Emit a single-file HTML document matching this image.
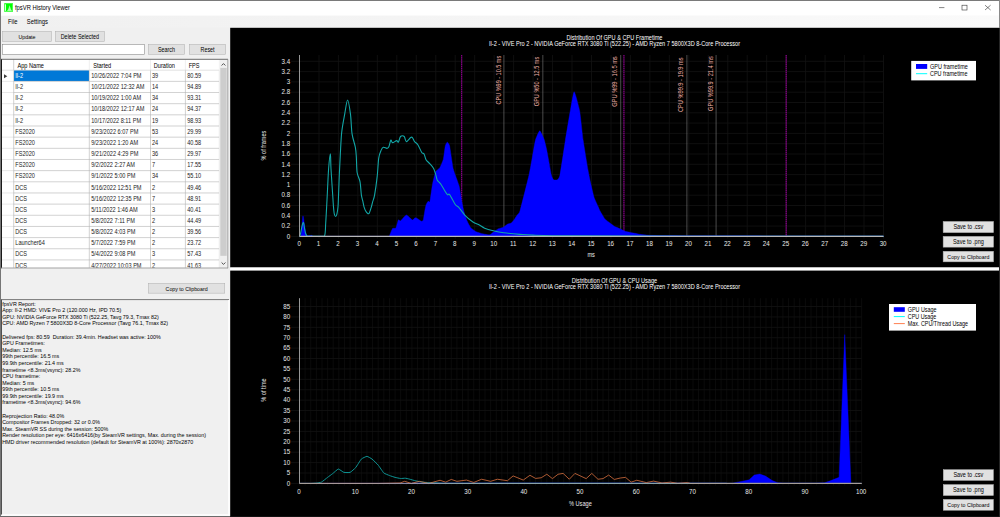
<!DOCTYPE html>
<html><head><meta charset="utf-8"><title>fpsVR History Viewer</title>
<style>html,body{margin:0;padding:0;width:1000px;height:517px;overflow:hidden;background:#f0f0f0;font-family:"Liberation Sans", sans-serif;}</style>
</head><body>
<svg width="1000" height="517" viewBox="0 0 1000 517" style="position:absolute;left:0;top:0" font-family='"Liberation Sans", sans-serif'>
<defs><linearGradient id="mg" x1="0" x2="1" y1="0" y2="0"><stop offset="0" stop-color="#f0f0f0"/><stop offset="1" stop-color="#fafafa"/></linearGradient></defs>
<rect x="0.00" y="0.00" width="1000.00" height="517.00" fill="#f0f0f0" />
<rect x="0.00" y="0.00" width="1000.00" height="15.80" fill="#ffffff" />
<rect x="0.00" y="15.80" width="1000.00" height="11.80" fill="url(#mg)" />
<rect x="4.20" y="3.00" width="8.70" height="8.80" fill="#00ff00" />
<rect x="4.60" y="3.40" width="7.90" height="8.00" fill="none" stroke="#70ff70" stroke-width="0.6" />
<rect x="5.00" y="4.30" width="0.90" height="6.50" fill="#f4fff4" />
<path d="M6.8,10.9 C8.2,10.6 8.6,8 9.6,5.2 C10.6,8 11,10.6 12.2,10.9 Z" fill="#a8ffa8"/>
<text x="0" y="0" transform="matrix(1,0,0,1.18,15.00,10.20)" font-size="5.85" fill="#000" text-anchor="start" >fpsVR History Viewer</text>
<line x1="939.00" y1="7.60" x2="944.40" y2="7.60" stroke="#333" stroke-width="0.6" />
<rect x="962.00" y="5.20" width="5.00" height="4.80" fill="none" stroke="#333" stroke-width="0.6" />
<line x1="985.00" y1="5.20" x2="990.60" y2="10.00" stroke="#333" stroke-width="0.6" />
<line x1="990.60" y1="5.20" x2="985.00" y2="10.00" stroke="#333" stroke-width="0.6" />
<text x="0" y="0" transform="matrix(1,0,0,1.15,8.00,23.60)" font-size="5.87" fill="#000" text-anchor="start" >File</text>
<text x="0" y="0" transform="matrix(1,0,0,1.15,26.80,23.60)" font-size="5.87" fill="#000" text-anchor="start" >Settings</text>
<rect x="2.55" y="31.45" width="48.90" height="10.00" fill="#e1e1e1" stroke="#adadad" stroke-width="0.5" />
<text x="0" y="0" transform="matrix(1,0,0,1.18,27.00,38.90)" font-size="5.3" fill="#000" text-anchor="middle" >Update</text>
<rect x="55.25" y="31.45" width="49.20" height="10.00" fill="#e1e1e1" stroke="#adadad" stroke-width="0.5" />
<text x="0" y="0" transform="matrix(1,0,0,1.18,79.85,38.90)" font-size="5.44" fill="#000" text-anchor="middle" >Delete Selected</text>
<rect x="2.55" y="44.55" width="141.90" height="9.70" fill="#ffffff" stroke="#7a7a7a" stroke-width="0.5" />
<rect x="148.45" y="44.35" width="36.10" height="9.90" fill="#e1e1e1" stroke="#adadad" stroke-width="0.5" />
<text x="0" y="0" transform="matrix(1,0,0,1.18,166.50,51.60)" font-size="5.4" fill="#000" text-anchor="middle" >Search</text>
<rect x="189.45" y="44.35" width="36.20" height="9.90" fill="#e1e1e1" stroke="#adadad" stroke-width="0.5" />
<text x="0" y="0" transform="matrix(1,0,0,1.18,207.55,51.60)" font-size="5.4" fill="#000" text-anchor="middle" >Reset</text>
<rect x="1.00" y="59.00" width="227.00" height="209.20" fill="#ffffff" />
<clipPath id="lc"><rect x="1.5" y="59.5" width="218" height="208.2"/></clipPath>
<g clip-path="url(#lc)">
<rect x="14.00" y="70.20" width="75.00" height="10.86" fill="#0078d7" />
<line x1="1.00" y1="81.36" x2="13.70" y2="81.36" stroke="#d8d8d8" stroke-width="0.6" />
<line x1="13.70" y1="81.36" x2="219.40" y2="81.36" stroke="#b4b4b4" stroke-width="0.6" />
<text x="0" y="0" transform="matrix(1,0,0,1.18,15.30,77.90)" font-size="5.6" fill="#ffffff" text-anchor="start" >Il-2</text>
<text x="0" y="0" transform="matrix(1,0,0,1.18,91.20,77.90)" font-size="5.6" fill="#1c1c1c" text-anchor="start" >10/26/2022 7:04 PM</text>
<text x="0" y="0" transform="matrix(1,0,0,1.18,152.00,77.90)" font-size="5.6" fill="#1c1c1c" text-anchor="start" >39</text>
<text x="0" y="0" transform="matrix(1,0,0,1.18,187.20,77.90)" font-size="5.6" fill="#1c1c1c" text-anchor="start" >80.59</text>
<line x1="1.00" y1="92.52" x2="13.70" y2="92.52" stroke="#d8d8d8" stroke-width="0.6" />
<line x1="13.70" y1="92.52" x2="219.40" y2="92.52" stroke="#b4b4b4" stroke-width="0.6" />
<text x="0" y="0" transform="matrix(1,0,0,1.18,15.30,89.06)" font-size="5.6" fill="#1c1c1c" text-anchor="start" >Il-2</text>
<text x="0" y="0" transform="matrix(1,0,0,1.18,91.20,89.06)" font-size="5.6" fill="#1c1c1c" text-anchor="start" >10/21/2022 12:32 AM</text>
<text x="0" y="0" transform="matrix(1,0,0,1.18,152.00,89.06)" font-size="5.6" fill="#1c1c1c" text-anchor="start" >14</text>
<text x="0" y="0" transform="matrix(1,0,0,1.18,187.20,89.06)" font-size="5.6" fill="#1c1c1c" text-anchor="start" >94.89</text>
<line x1="1.00" y1="103.68" x2="13.70" y2="103.68" stroke="#d8d8d8" stroke-width="0.6" />
<line x1="13.70" y1="103.68" x2="219.40" y2="103.68" stroke="#b4b4b4" stroke-width="0.6" />
<text x="0" y="0" transform="matrix(1,0,0,1.18,15.30,100.22)" font-size="5.6" fill="#1c1c1c" text-anchor="start" >Il-2</text>
<text x="0" y="0" transform="matrix(1,0,0,1.18,91.20,100.22)" font-size="5.6" fill="#1c1c1c" text-anchor="start" >10/19/2022 1:00 AM</text>
<text x="0" y="0" transform="matrix(1,0,0,1.18,152.00,100.22)" font-size="5.6" fill="#1c1c1c" text-anchor="start" >34</text>
<text x="0" y="0" transform="matrix(1,0,0,1.18,187.20,100.22)" font-size="5.6" fill="#1c1c1c" text-anchor="start" >93.31</text>
<line x1="1.00" y1="114.84" x2="13.70" y2="114.84" stroke="#d8d8d8" stroke-width="0.6" />
<line x1="13.70" y1="114.84" x2="219.40" y2="114.84" stroke="#b4b4b4" stroke-width="0.6" />
<text x="0" y="0" transform="matrix(1,0,0,1.18,15.30,111.38)" font-size="5.6" fill="#1c1c1c" text-anchor="start" >Il-2</text>
<text x="0" y="0" transform="matrix(1,0,0,1.18,91.20,111.38)" font-size="5.6" fill="#1c1c1c" text-anchor="start" >10/18/2022 12:17 AM</text>
<text x="0" y="0" transform="matrix(1,0,0,1.18,152.00,111.38)" font-size="5.6" fill="#1c1c1c" text-anchor="start" >24</text>
<text x="0" y="0" transform="matrix(1,0,0,1.18,187.20,111.38)" font-size="5.6" fill="#1c1c1c" text-anchor="start" >94.37</text>
<line x1="1.00" y1="126.00" x2="13.70" y2="126.00" stroke="#d8d8d8" stroke-width="0.6" />
<line x1="13.70" y1="126.00" x2="219.40" y2="126.00" stroke="#b4b4b4" stroke-width="0.6" />
<text x="0" y="0" transform="matrix(1,0,0,1.18,15.30,122.54)" font-size="5.6" fill="#1c1c1c" text-anchor="start" >Il-2</text>
<text x="0" y="0" transform="matrix(1,0,0,1.18,91.20,122.54)" font-size="5.6" fill="#1c1c1c" text-anchor="start" >10/17/2022 8:11 PM</text>
<text x="0" y="0" transform="matrix(1,0,0,1.18,152.00,122.54)" font-size="5.6" fill="#1c1c1c" text-anchor="start" >19</text>
<text x="0" y="0" transform="matrix(1,0,0,1.18,187.20,122.54)" font-size="5.6" fill="#1c1c1c" text-anchor="start" >98.93</text>
<line x1="1.00" y1="137.16" x2="13.70" y2="137.16" stroke="#d8d8d8" stroke-width="0.6" />
<line x1="13.70" y1="137.16" x2="219.40" y2="137.16" stroke="#b4b4b4" stroke-width="0.6" />
<text x="0" y="0" transform="matrix(1,0,0,1.18,15.30,133.70)" font-size="5.6" fill="#1c1c1c" text-anchor="start" >FS2020</text>
<text x="0" y="0" transform="matrix(1,0,0,1.18,91.20,133.70)" font-size="5.6" fill="#1c1c1c" text-anchor="start" >9/23/2022 6:07 PM</text>
<text x="0" y="0" transform="matrix(1,0,0,1.18,152.00,133.70)" font-size="5.6" fill="#1c1c1c" text-anchor="start" >53</text>
<text x="0" y="0" transform="matrix(1,0,0,1.18,187.20,133.70)" font-size="5.6" fill="#1c1c1c" text-anchor="start" >29.99</text>
<line x1="1.00" y1="148.32" x2="13.70" y2="148.32" stroke="#d8d8d8" stroke-width="0.6" />
<line x1="13.70" y1="148.32" x2="219.40" y2="148.32" stroke="#b4b4b4" stroke-width="0.6" />
<text x="0" y="0" transform="matrix(1,0,0,1.18,15.30,144.86)" font-size="5.6" fill="#1c1c1c" text-anchor="start" >FS2020</text>
<text x="0" y="0" transform="matrix(1,0,0,1.18,91.20,144.86)" font-size="5.6" fill="#1c1c1c" text-anchor="start" >9/23/2022 1:20 AM</text>
<text x="0" y="0" transform="matrix(1,0,0,1.18,152.00,144.86)" font-size="5.6" fill="#1c1c1c" text-anchor="start" >24</text>
<text x="0" y="0" transform="matrix(1,0,0,1.18,187.20,144.86)" font-size="5.6" fill="#1c1c1c" text-anchor="start" >40.58</text>
<line x1="1.00" y1="159.48" x2="13.70" y2="159.48" stroke="#d8d8d8" stroke-width="0.6" />
<line x1="13.70" y1="159.48" x2="219.40" y2="159.48" stroke="#b4b4b4" stroke-width="0.6" />
<text x="0" y="0" transform="matrix(1,0,0,1.18,15.30,156.02)" font-size="5.6" fill="#1c1c1c" text-anchor="start" >FS2020</text>
<text x="0" y="0" transform="matrix(1,0,0,1.18,91.20,156.02)" font-size="5.6" fill="#1c1c1c" text-anchor="start" >9/21/2022 4:29 PM</text>
<text x="0" y="0" transform="matrix(1,0,0,1.18,152.00,156.02)" font-size="5.6" fill="#1c1c1c" text-anchor="start" >36</text>
<text x="0" y="0" transform="matrix(1,0,0,1.18,187.20,156.02)" font-size="5.6" fill="#1c1c1c" text-anchor="start" >29.97</text>
<line x1="1.00" y1="170.64" x2="13.70" y2="170.64" stroke="#d8d8d8" stroke-width="0.6" />
<line x1="13.70" y1="170.64" x2="219.40" y2="170.64" stroke="#b4b4b4" stroke-width="0.6" />
<text x="0" y="0" transform="matrix(1,0,0,1.18,15.30,167.18)" font-size="5.6" fill="#1c1c1c" text-anchor="start" >FS2020</text>
<text x="0" y="0" transform="matrix(1,0,0,1.18,91.20,167.18)" font-size="5.6" fill="#1c1c1c" text-anchor="start" >9/2/2022 2:27 AM</text>
<text x="0" y="0" transform="matrix(1,0,0,1.18,152.00,167.18)" font-size="5.6" fill="#1c1c1c" text-anchor="start" >7</text>
<text x="0" y="0" transform="matrix(1,0,0,1.18,187.20,167.18)" font-size="5.6" fill="#1c1c1c" text-anchor="start" >17.55</text>
<line x1="1.00" y1="181.80" x2="13.70" y2="181.80" stroke="#d8d8d8" stroke-width="0.6" />
<line x1="13.70" y1="181.80" x2="219.40" y2="181.80" stroke="#b4b4b4" stroke-width="0.6" />
<text x="0" y="0" transform="matrix(1,0,0,1.18,15.30,178.34)" font-size="5.6" fill="#1c1c1c" text-anchor="start" >FS2020</text>
<text x="0" y="0" transform="matrix(1,0,0,1.18,91.20,178.34)" font-size="5.6" fill="#1c1c1c" text-anchor="start" >9/1/2022 5:00 PM</text>
<text x="0" y="0" transform="matrix(1,0,0,1.18,152.00,178.34)" font-size="5.6" fill="#1c1c1c" text-anchor="start" >34</text>
<text x="0" y="0" transform="matrix(1,0,0,1.18,187.20,178.34)" font-size="5.6" fill="#1c1c1c" text-anchor="start" >55.10</text>
<line x1="1.00" y1="192.96" x2="13.70" y2="192.96" stroke="#d8d8d8" stroke-width="0.6" />
<line x1="13.70" y1="192.96" x2="219.40" y2="192.96" stroke="#b4b4b4" stroke-width="0.6" />
<text x="0" y="0" transform="matrix(1,0,0,1.18,15.30,189.50)" font-size="5.6" fill="#1c1c1c" text-anchor="start" >DCS</text>
<text x="0" y="0" transform="matrix(1,0,0,1.18,91.20,189.50)" font-size="5.6" fill="#1c1c1c" text-anchor="start" >5/16/2022 12:51 PM</text>
<text x="0" y="0" transform="matrix(1,0,0,1.18,152.00,189.50)" font-size="5.6" fill="#1c1c1c" text-anchor="start" >2</text>
<text x="0" y="0" transform="matrix(1,0,0,1.18,187.20,189.50)" font-size="5.6" fill="#1c1c1c" text-anchor="start" >49.46</text>
<line x1="1.00" y1="204.12" x2="13.70" y2="204.12" stroke="#d8d8d8" stroke-width="0.6" />
<line x1="13.70" y1="204.12" x2="219.40" y2="204.12" stroke="#b4b4b4" stroke-width="0.6" />
<text x="0" y="0" transform="matrix(1,0,0,1.18,15.30,200.66)" font-size="5.6" fill="#1c1c1c" text-anchor="start" >DCS</text>
<text x="0" y="0" transform="matrix(1,0,0,1.18,91.20,200.66)" font-size="5.6" fill="#1c1c1c" text-anchor="start" >5/16/2022 12:35 PM</text>
<text x="0" y="0" transform="matrix(1,0,0,1.18,152.00,200.66)" font-size="5.6" fill="#1c1c1c" text-anchor="start" >7</text>
<text x="0" y="0" transform="matrix(1,0,0,1.18,187.20,200.66)" font-size="5.6" fill="#1c1c1c" text-anchor="start" >48.91</text>
<line x1="1.00" y1="215.28" x2="13.70" y2="215.28" stroke="#d8d8d8" stroke-width="0.6" />
<line x1="13.70" y1="215.28" x2="219.40" y2="215.28" stroke="#b4b4b4" stroke-width="0.6" />
<text x="0" y="0" transform="matrix(1,0,0,1.18,15.30,211.82)" font-size="5.6" fill="#1c1c1c" text-anchor="start" >DCS</text>
<text x="0" y="0" transform="matrix(1,0,0,1.18,91.20,211.82)" font-size="5.6" fill="#1c1c1c" text-anchor="start" >5/11/2022 1:46 AM</text>
<text x="0" y="0" transform="matrix(1,0,0,1.18,152.00,211.82)" font-size="5.6" fill="#1c1c1c" text-anchor="start" >3</text>
<text x="0" y="0" transform="matrix(1,0,0,1.18,187.20,211.82)" font-size="5.6" fill="#1c1c1c" text-anchor="start" >40.41</text>
<line x1="1.00" y1="226.44" x2="13.70" y2="226.44" stroke="#d8d8d8" stroke-width="0.6" />
<line x1="13.70" y1="226.44" x2="219.40" y2="226.44" stroke="#b4b4b4" stroke-width="0.6" />
<text x="0" y="0" transform="matrix(1,0,0,1.18,15.30,222.98)" font-size="5.6" fill="#1c1c1c" text-anchor="start" >DCS</text>
<text x="0" y="0" transform="matrix(1,0,0,1.18,91.20,222.98)" font-size="5.6" fill="#1c1c1c" text-anchor="start" >5/8/2022 7:11 PM</text>
<text x="0" y="0" transform="matrix(1,0,0,1.18,152.00,222.98)" font-size="5.6" fill="#1c1c1c" text-anchor="start" >2</text>
<text x="0" y="0" transform="matrix(1,0,0,1.18,187.20,222.98)" font-size="5.6" fill="#1c1c1c" text-anchor="start" >44.49</text>
<line x1="1.00" y1="237.60" x2="13.70" y2="237.60" stroke="#d8d8d8" stroke-width="0.6" />
<line x1="13.70" y1="237.60" x2="219.40" y2="237.60" stroke="#b4b4b4" stroke-width="0.6" />
<text x="0" y="0" transform="matrix(1,0,0,1.18,15.30,234.14)" font-size="5.6" fill="#1c1c1c" text-anchor="start" >DCS</text>
<text x="0" y="0" transform="matrix(1,0,0,1.18,91.20,234.14)" font-size="5.6" fill="#1c1c1c" text-anchor="start" >5/8/2022 4:03 PM</text>
<text x="0" y="0" transform="matrix(1,0,0,1.18,152.00,234.14)" font-size="5.6" fill="#1c1c1c" text-anchor="start" >2</text>
<text x="0" y="0" transform="matrix(1,0,0,1.18,187.20,234.14)" font-size="5.6" fill="#1c1c1c" text-anchor="start" >39.56</text>
<line x1="1.00" y1="248.76" x2="13.70" y2="248.76" stroke="#d8d8d8" stroke-width="0.6" />
<line x1="13.70" y1="248.76" x2="219.40" y2="248.76" stroke="#b4b4b4" stroke-width="0.6" />
<text x="0" y="0" transform="matrix(1,0,0,1.18,15.30,245.30)" font-size="5.6" fill="#1c1c1c" text-anchor="start" >Launcher64</text>
<text x="0" y="0" transform="matrix(1,0,0,1.18,91.20,245.30)" font-size="5.6" fill="#1c1c1c" text-anchor="start" >5/7/2022 7:59 PM</text>
<text x="0" y="0" transform="matrix(1,0,0,1.18,152.00,245.30)" font-size="5.6" fill="#1c1c1c" text-anchor="start" >2</text>
<text x="0" y="0" transform="matrix(1,0,0,1.18,187.20,245.30)" font-size="5.6" fill="#1c1c1c" text-anchor="start" >23.72</text>
<line x1="1.00" y1="259.92" x2="13.70" y2="259.92" stroke="#d8d8d8" stroke-width="0.6" />
<line x1="13.70" y1="259.92" x2="219.40" y2="259.92" stroke="#b4b4b4" stroke-width="0.6" />
<text x="0" y="0" transform="matrix(1,0,0,1.18,15.30,256.46)" font-size="5.6" fill="#1c1c1c" text-anchor="start" >DCS</text>
<text x="0" y="0" transform="matrix(1,0,0,1.18,91.20,256.46)" font-size="5.6" fill="#1c1c1c" text-anchor="start" >5/4/2022 9:08 PM</text>
<text x="0" y="0" transform="matrix(1,0,0,1.18,152.00,256.46)" font-size="5.6" fill="#1c1c1c" text-anchor="start" >3</text>
<text x="0" y="0" transform="matrix(1,0,0,1.18,187.20,256.46)" font-size="5.6" fill="#1c1c1c" text-anchor="start" >57.43</text>
<line x1="1.00" y1="271.08" x2="13.70" y2="271.08" stroke="#d8d8d8" stroke-width="0.6" />
<line x1="13.70" y1="271.08" x2="219.40" y2="271.08" stroke="#b4b4b4" stroke-width="0.6" />
<text x="0" y="0" transform="matrix(1,0,0,1.18,15.30,267.62)" font-size="5.6" fill="#1c1c1c" text-anchor="start" >DCS</text>
<text x="0" y="0" transform="matrix(1,0,0,1.18,91.20,267.62)" font-size="5.6" fill="#1c1c1c" text-anchor="start" >4/27/2022 10:03 PM</text>
<text x="0" y="0" transform="matrix(1,0,0,1.18,152.00,267.62)" font-size="5.6" fill="#1c1c1c" text-anchor="start" >2</text>
<text x="0" y="0" transform="matrix(1,0,0,1.18,187.20,267.62)" font-size="5.6" fill="#1c1c1c" text-anchor="start" >41.63</text>
<line x1="13.70" y1="59.00" x2="13.70" y2="268.20" stroke="#b4b4b4" stroke-width="0.6" />
<line x1="89.30" y1="70.20" x2="89.30" y2="268.20" stroke="#b4b4b4" stroke-width="0.6" />
<line x1="89.30" y1="59.00" x2="89.30" y2="70.20" stroke="#e4e4e4" stroke-width="0.6" />
<line x1="150.50" y1="70.20" x2="150.50" y2="268.20" stroke="#b4b4b4" stroke-width="0.6" />
<line x1="150.50" y1="59.00" x2="150.50" y2="70.20" stroke="#e4e4e4" stroke-width="0.6" />
<line x1="185.40" y1="70.20" x2="185.40" y2="268.20" stroke="#b4b4b4" stroke-width="0.6" />
<line x1="185.40" y1="59.00" x2="185.40" y2="70.20" stroke="#e4e4e4" stroke-width="0.6" />
<line x1="219.40" y1="70.20" x2="219.40" y2="268.20" stroke="#b4b4b4" stroke-width="0.6" />
<line x1="219.40" y1="59.00" x2="219.40" y2="70.20" stroke="#e4e4e4" stroke-width="0.6" />
<line x1="1.00" y1="70.20" x2="219.40" y2="70.20" stroke="#d0d0d0" stroke-width="0.6" />
</g>
<text x="0" y="0" transform="matrix(1,0,0,1.18,17.50,67.50)" font-size="5.6" fill="#000" text-anchor="start" >App Name</text>
<text x="0" y="0" transform="matrix(1,0,0,1.18,93.20,67.50)" font-size="5.6" fill="#000" text-anchor="start" >Started</text>
<text x="0" y="0" transform="matrix(1,0,0,1.18,153.80,67.50)" font-size="5.6" fill="#000" text-anchor="start" >Duration</text>
<text x="0" y="0" transform="matrix(1,0,0,1.18,188.70,67.50)" font-size="5.6" fill="#000" text-anchor="start" >FPS</text>
<path d="M4,74.3 L7.3,76.3 L4,78.3 Z" fill="#3c3c3c"/>
<rect x="219.40" y="59.50" width="8.10" height="208.20" fill="#f0f0f0" />
<rect x="220.30" y="67.90" width="6.40" height="187.90" fill="#cdcdcd" />
<path d="M221.6,65.5 L223.5,63.6 L225.4,65.5" fill="none" stroke="#404040" stroke-width="0.9"/>
<path d="M221.6,262.5 L223.5,264.4 L225.4,262.5" fill="none" stroke="#404040" stroke-width="0.9"/>
<line x1="1.00" y1="59.30" x2="228.00" y2="59.30" stroke="#5a5a5a" stroke-width="0.9" />
<line x1="1.50" y1="59.30" x2="1.50" y2="268.20" stroke="#1a1a1a" stroke-width="1.0" />
<line x1="227.80" y1="59.30" x2="227.80" y2="268.20" stroke="#8a8a8a" stroke-width="0.8" />
<line x1="1.00" y1="268.00" x2="228.00" y2="268.00" stroke="#8a8a8a" stroke-width="0.8" />
<rect x="148.45" y="283.45" width="76.30" height="9.70" fill="#e1e1e1" stroke="#adadad" stroke-width="0.5" />
<text x="0" y="0" transform="matrix(1,0,0,1.18,186.60,290.60)" font-size="5.25" fill="#000" text-anchor="middle" >Copy to Clipboard</text>
<rect x="1.00" y="299.50" width="229.00" height="216.00" fill="#f0f0f0" />
<line x1="1.00" y1="299.60" x2="229.00" y2="299.60" stroke="#6a6a6a" stroke-width="0.9" />
<line x1="1.50" y1="299.60" x2="1.50" y2="515.00" stroke="#505050" stroke-width="1.0" />
<line x1="229.00" y1="300.00" x2="229.00" y2="515.40" stroke="#ffffff" stroke-width="1.6" />
<line x1="1.40" y1="515.00" x2="229.60" y2="515.00" stroke="#ffffff" stroke-width="1.3" />
<text x="0" y="0" transform="matrix(1,0,0,1.12,2.20,305.60)" font-size="5.35" fill="#000" text-anchor="start" xml:space="preserve">fpsVR Report:</text>
<text x="0" y="0" transform="matrix(1,0,0,1.12,2.20,312.19)" font-size="5.35" fill="#000" text-anchor="start" xml:space="preserve">App: Il-2 HMD: VIVE Pro 2 (120.000 Hz, IPD 70.5)</text>
<text x="0" y="0" transform="matrix(1,0,0,1.12,2.20,318.78)" font-size="5.35" fill="#000" text-anchor="start" xml:space="preserve">GPU: NVIDIA GeForce RTX 3080 Ti (522.25, Tavg 79.3, Tmax 82)</text>
<text x="0" y="0" transform="matrix(1,0,0,1.12,2.20,325.37)" font-size="5.35" fill="#000" text-anchor="start" xml:space="preserve">CPU: AMD Ryzen 7 5800X3D 8-Core Processor (Tavg 76.1, Tmax 82)</text>
<text x="0" y="0" transform="matrix(1,0,0,1.12,2.20,338.55)" font-size="5.35" fill="#000" text-anchor="start" xml:space="preserve">Delivered fps: 80.59  Duration: 39.4min. Headset was active: 100%</text>
<text x="0" y="0" transform="matrix(1,0,0,1.12,2.20,345.14)" font-size="5.35" fill="#000" text-anchor="start" xml:space="preserve">GPU Frametimes:</text>
<text x="0" y="0" transform="matrix(1,0,0,1.12,2.20,351.73)" font-size="5.35" fill="#000" text-anchor="start" xml:space="preserve">Median: 12.5 ms</text>
<text x="0" y="0" transform="matrix(1,0,0,1.12,2.20,358.32)" font-size="5.35" fill="#000" text-anchor="start" xml:space="preserve">99th percentile: 16.5 ms</text>
<text x="0" y="0" transform="matrix(1,0,0,1.12,2.20,364.91)" font-size="5.35" fill="#000" text-anchor="start" xml:space="preserve">99.9th percentile: 21.4 ms</text>
<text x="0" y="0" transform="matrix(1,0,0,1.12,2.20,371.50)" font-size="5.35" fill="#000" text-anchor="start" xml:space="preserve">frametime &lt;8.3ms(vsync): 28.2%</text>
<text x="0" y="0" transform="matrix(1,0,0,1.12,2.20,378.09)" font-size="5.35" fill="#000" text-anchor="start" xml:space="preserve">CPU frametime:</text>
<text x="0" y="0" transform="matrix(1,0,0,1.12,2.20,384.68)" font-size="5.35" fill="#000" text-anchor="start" xml:space="preserve">Median: 5 ms</text>
<text x="0" y="0" transform="matrix(1,0,0,1.12,2.20,391.27)" font-size="5.35" fill="#000" text-anchor="start" xml:space="preserve">99th percentile: 10.5 ms</text>
<text x="0" y="0" transform="matrix(1,0,0,1.12,2.20,397.86)" font-size="5.35" fill="#000" text-anchor="start" xml:space="preserve">99.9th percentile: 19.9 ms</text>
<text x="0" y="0" transform="matrix(1,0,0,1.12,2.20,404.45)" font-size="5.35" fill="#000" text-anchor="start" xml:space="preserve">frametime &lt;8.3ms(vsync): 94.6%</text>
<text x="0" y="0" transform="matrix(1,0,0,1.12,2.20,417.63)" font-size="5.35" fill="#000" text-anchor="start" xml:space="preserve">Reprojection Ratio: 48.0%</text>
<text x="0" y="0" transform="matrix(1,0,0,1.12,2.20,424.22)" font-size="5.35" fill="#000" text-anchor="start" xml:space="preserve">Compositor Frames Dropped: 32 or 0.0%</text>
<text x="0" y="0" transform="matrix(1,0,0,1.12,2.20,430.81)" font-size="5.35" fill="#000" text-anchor="start" xml:space="preserve">Max. SteamVR SS during the session: 500%</text>
<text x="0" y="0" transform="matrix(1,0,0,1.12,2.20,437.40)" font-size="5.35" fill="#000" text-anchor="start" xml:space="preserve">Render resolution per eye: 6416x6416(by SteamVR settings, Max. during the session)</text>
<text x="0" y="0" transform="matrix(1,0,0,1.12,2.20,443.99)" font-size="5.35" fill="#000" text-anchor="start" xml:space="preserve">HMD driver recommended resolution (default for SteamVR at 100%): 2870x2870</text>
<rect x="230.20" y="27.80" width="768.80" height="239.70" fill="#000000" />
<rect x="230.20" y="267.50" width="768.80" height="3.10" fill="#ffffff" />
<rect x="230.20" y="270.60" width="768.80" height="246.40" fill="#000000" />
<line x1="0.00" y1="0.50" x2="1000.00" y2="0.50" stroke="#7a7a7a" stroke-width="1" />
<line x1="0.50" y1="0.00" x2="0.50" y2="517.00" stroke="#767676" stroke-width="1.0" />
<line x1="0.00" y1="516.50" x2="230.20" y2="516.50" stroke="#6a6a6a" stroke-width="1" />
<line x1="230.20" y1="516.50" x2="1000.00" y2="516.50" stroke="#111111" stroke-width="1" />
<line x1="999.50" y1="0.00" x2="999.50" y2="27.80" stroke="#8a8a8a" stroke-width="1" />
<line x1="999.50" y1="27.80" x2="999.50" y2="517.00" stroke="#262626" stroke-width="1" />
<line x1="318.97" y1="55.00" x2="318.97" y2="238.60" stroke="#131313" stroke-width="0.8" />
<line x1="338.43" y1="55.00" x2="338.43" y2="238.60" stroke="#131313" stroke-width="0.8" />
<line x1="357.90" y1="55.00" x2="357.90" y2="238.60" stroke="#131313" stroke-width="0.8" />
<line x1="377.37" y1="55.00" x2="377.37" y2="238.60" stroke="#131313" stroke-width="0.8" />
<line x1="396.83" y1="55.00" x2="396.83" y2="238.60" stroke="#131313" stroke-width="0.8" />
<line x1="416.30" y1="55.00" x2="416.30" y2="238.60" stroke="#131313" stroke-width="0.8" />
<line x1="435.77" y1="55.00" x2="435.77" y2="238.60" stroke="#131313" stroke-width="0.8" />
<line x1="455.23" y1="55.00" x2="455.23" y2="238.60" stroke="#131313" stroke-width="0.8" />
<line x1="474.70" y1="55.00" x2="474.70" y2="238.60" stroke="#131313" stroke-width="0.8" />
<line x1="494.17" y1="55.00" x2="494.17" y2="238.60" stroke="#131313" stroke-width="0.8" />
<line x1="513.63" y1="55.00" x2="513.63" y2="238.60" stroke="#131313" stroke-width="0.8" />
<line x1="533.10" y1="55.00" x2="533.10" y2="238.60" stroke="#131313" stroke-width="0.8" />
<line x1="552.57" y1="55.00" x2="552.57" y2="238.60" stroke="#131313" stroke-width="0.8" />
<line x1="572.03" y1="55.00" x2="572.03" y2="238.60" stroke="#131313" stroke-width="0.8" />
<line x1="591.50" y1="55.00" x2="591.50" y2="238.60" stroke="#131313" stroke-width="0.8" />
<line x1="610.97" y1="55.00" x2="610.97" y2="238.60" stroke="#131313" stroke-width="0.8" />
<line x1="630.43" y1="55.00" x2="630.43" y2="238.60" stroke="#131313" stroke-width="0.8" />
<line x1="649.90" y1="55.00" x2="649.90" y2="238.60" stroke="#131313" stroke-width="0.8" />
<line x1="669.37" y1="55.00" x2="669.37" y2="238.60" stroke="#131313" stroke-width="0.8" />
<line x1="688.83" y1="55.00" x2="688.83" y2="238.60" stroke="#131313" stroke-width="0.8" />
<line x1="708.30" y1="55.00" x2="708.30" y2="238.60" stroke="#131313" stroke-width="0.8" />
<line x1="727.77" y1="55.00" x2="727.77" y2="238.60" stroke="#131313" stroke-width="0.8" />
<line x1="747.23" y1="55.00" x2="747.23" y2="238.60" stroke="#131313" stroke-width="0.8" />
<line x1="766.70" y1="55.00" x2="766.70" y2="238.60" stroke="#131313" stroke-width="0.8" />
<line x1="786.17" y1="55.00" x2="786.17" y2="238.60" stroke="#131313" stroke-width="0.8" />
<line x1="805.63" y1="55.00" x2="805.63" y2="238.60" stroke="#131313" stroke-width="0.8" />
<line x1="825.10" y1="55.00" x2="825.10" y2="238.60" stroke="#131313" stroke-width="0.8" />
<line x1="844.57" y1="55.00" x2="844.57" y2="238.60" stroke="#131313" stroke-width="0.8" />
<line x1="864.03" y1="55.00" x2="864.03" y2="238.60" stroke="#131313" stroke-width="0.8" />
<line x1="883.50" y1="55.00" x2="883.50" y2="238.60" stroke="#131313" stroke-width="0.8" />
<line x1="291.00" y1="226.10" x2="883.50" y2="226.10" stroke="#131313" stroke-width="0.8" />
<line x1="291.00" y1="215.80" x2="883.50" y2="215.80" stroke="#131313" stroke-width="0.8" />
<line x1="291.00" y1="205.50" x2="883.50" y2="205.50" stroke="#131313" stroke-width="0.8" />
<line x1="291.00" y1="195.20" x2="883.50" y2="195.20" stroke="#131313" stroke-width="0.8" />
<line x1="291.00" y1="184.90" x2="883.50" y2="184.90" stroke="#131313" stroke-width="0.8" />
<line x1="291.00" y1="174.60" x2="883.50" y2="174.60" stroke="#131313" stroke-width="0.8" />
<line x1="291.00" y1="164.30" x2="883.50" y2="164.30" stroke="#131313" stroke-width="0.8" />
<line x1="291.00" y1="154.00" x2="883.50" y2="154.00" stroke="#131313" stroke-width="0.8" />
<line x1="291.00" y1="143.70" x2="883.50" y2="143.70" stroke="#131313" stroke-width="0.8" />
<line x1="291.00" y1="133.40" x2="883.50" y2="133.40" stroke="#131313" stroke-width="0.8" />
<line x1="291.00" y1="123.10" x2="883.50" y2="123.10" stroke="#131313" stroke-width="0.8" />
<line x1="291.00" y1="112.80" x2="883.50" y2="112.80" stroke="#131313" stroke-width="0.8" />
<line x1="291.00" y1="102.50" x2="883.50" y2="102.50" stroke="#131313" stroke-width="0.8" />
<line x1="291.00" y1="92.20" x2="883.50" y2="92.20" stroke="#131313" stroke-width="0.8" />
<line x1="291.00" y1="81.90" x2="883.50" y2="81.90" stroke="#131313" stroke-width="0.8" />
<line x1="291.00" y1="71.60" x2="883.50" y2="71.60" stroke="#131313" stroke-width="0.8" />
<line x1="291.00" y1="61.30" x2="883.50" y2="61.30" stroke="#131313" stroke-width="0.8" />
<line x1="291.00" y1="236.40" x2="299.50" y2="236.40" stroke="#131313" stroke-width="0.8" />
<line x1="299.50" y1="236.40" x2="299.50" y2="238.60" stroke="#131313" stroke-width="0.8" />
<text x="0" y="0" transform="matrix(1,0,0,1.18,290.20,238.65)" font-size="6.2" fill="#e8e8e8" text-anchor="end" >0</text>
<text x="0" y="0" transform="matrix(1,0,0,1.18,290.20,228.35)" font-size="6.2" fill="#e8e8e8" text-anchor="end" >0.2</text>
<text x="0" y="0" transform="matrix(1,0,0,1.18,290.20,218.05)" font-size="6.2" fill="#e8e8e8" text-anchor="end" >0.4</text>
<text x="0" y="0" transform="matrix(1,0,0,1.18,290.20,207.75)" font-size="6.2" fill="#e8e8e8" text-anchor="end" >0.6</text>
<text x="0" y="0" transform="matrix(1,0,0,1.18,290.20,197.45)" font-size="6.2" fill="#e8e8e8" text-anchor="end" >0.8</text>
<text x="0" y="0" transform="matrix(1,0,0,1.18,290.20,187.15)" font-size="6.2" fill="#e8e8e8" text-anchor="end" >1</text>
<text x="0" y="0" transform="matrix(1,0,0,1.18,290.20,176.85)" font-size="6.2" fill="#e8e8e8" text-anchor="end" >1.2</text>
<text x="0" y="0" transform="matrix(1,0,0,1.18,290.20,166.55)" font-size="6.2" fill="#e8e8e8" text-anchor="end" >1.4</text>
<text x="0" y="0" transform="matrix(1,0,0,1.18,290.20,156.25)" font-size="6.2" fill="#e8e8e8" text-anchor="end" >1.6</text>
<text x="0" y="0" transform="matrix(1,0,0,1.18,290.20,145.95)" font-size="6.2" fill="#e8e8e8" text-anchor="end" >1.8</text>
<text x="0" y="0" transform="matrix(1,0,0,1.18,290.20,135.65)" font-size="6.2" fill="#e8e8e8" text-anchor="end" >2</text>
<text x="0" y="0" transform="matrix(1,0,0,1.18,290.20,125.35)" font-size="6.2" fill="#e8e8e8" text-anchor="end" >2.2</text>
<text x="0" y="0" transform="matrix(1,0,0,1.18,290.20,115.05)" font-size="6.2" fill="#e8e8e8" text-anchor="end" >2.4</text>
<text x="0" y="0" transform="matrix(1,0,0,1.18,290.20,104.75)" font-size="6.2" fill="#e8e8e8" text-anchor="end" >2.6</text>
<text x="0" y="0" transform="matrix(1,0,0,1.18,290.20,94.45)" font-size="6.2" fill="#e8e8e8" text-anchor="end" >2.8</text>
<text x="0" y="0" transform="matrix(1,0,0,1.18,290.20,84.15)" font-size="6.2" fill="#e8e8e8" text-anchor="end" >3</text>
<text x="0" y="0" transform="matrix(1,0,0,1.18,290.20,73.85)" font-size="6.2" fill="#e8e8e8" text-anchor="end" >3.2</text>
<text x="0" y="0" transform="matrix(1,0,0,1.18,290.20,63.55)" font-size="6.2" fill="#e8e8e8" text-anchor="end" >3.4</text>
<text x="0" y="0" transform="matrix(1,0,0,1.18,299.10,245.80)" font-size="6.2" fill="#e8e8e8" text-anchor="middle" >0</text>
<text x="0" y="0" transform="matrix(1,0,0,1.18,318.57,245.80)" font-size="6.2" fill="#e8e8e8" text-anchor="middle" >1</text>
<text x="0" y="0" transform="matrix(1,0,0,1.18,338.03,245.80)" font-size="6.2" fill="#e8e8e8" text-anchor="middle" >2</text>
<text x="0" y="0" transform="matrix(1,0,0,1.18,357.50,245.80)" font-size="6.2" fill="#e8e8e8" text-anchor="middle" >3</text>
<text x="0" y="0" transform="matrix(1,0,0,1.18,376.97,245.80)" font-size="6.2" fill="#e8e8e8" text-anchor="middle" >4</text>
<text x="0" y="0" transform="matrix(1,0,0,1.18,396.43,245.80)" font-size="6.2" fill="#e8e8e8" text-anchor="middle" >5</text>
<text x="0" y="0" transform="matrix(1,0,0,1.18,415.90,245.80)" font-size="6.2" fill="#e8e8e8" text-anchor="middle" >6</text>
<text x="0" y="0" transform="matrix(1,0,0,1.18,435.37,245.80)" font-size="6.2" fill="#e8e8e8" text-anchor="middle" >7</text>
<text x="0" y="0" transform="matrix(1,0,0,1.18,454.83,245.80)" font-size="6.2" fill="#e8e8e8" text-anchor="middle" >8</text>
<text x="0" y="0" transform="matrix(1,0,0,1.18,474.30,245.80)" font-size="6.2" fill="#e8e8e8" text-anchor="middle" >9</text>
<text x="0" y="0" transform="matrix(1,0,0,1.18,493.77,245.80)" font-size="6.2" fill="#e8e8e8" text-anchor="middle" >10</text>
<text x="0" y="0" transform="matrix(1,0,0,1.18,513.23,245.80)" font-size="6.2" fill="#e8e8e8" text-anchor="middle" >11</text>
<text x="0" y="0" transform="matrix(1,0,0,1.18,532.70,245.80)" font-size="6.2" fill="#e8e8e8" text-anchor="middle" >12</text>
<text x="0" y="0" transform="matrix(1,0,0,1.18,552.17,245.80)" font-size="6.2" fill="#e8e8e8" text-anchor="middle" >13</text>
<text x="0" y="0" transform="matrix(1,0,0,1.18,571.63,245.80)" font-size="6.2" fill="#e8e8e8" text-anchor="middle" >14</text>
<text x="0" y="0" transform="matrix(1,0,0,1.18,591.10,245.80)" font-size="6.2" fill="#e8e8e8" text-anchor="middle" >15</text>
<text x="0" y="0" transform="matrix(1,0,0,1.18,610.57,245.80)" font-size="6.2" fill="#e8e8e8" text-anchor="middle" >16</text>
<text x="0" y="0" transform="matrix(1,0,0,1.18,630.03,245.80)" font-size="6.2" fill="#e8e8e8" text-anchor="middle" >17</text>
<text x="0" y="0" transform="matrix(1,0,0,1.18,649.50,245.80)" font-size="6.2" fill="#e8e8e8" text-anchor="middle" >18</text>
<text x="0" y="0" transform="matrix(1,0,0,1.18,668.97,245.80)" font-size="6.2" fill="#e8e8e8" text-anchor="middle" >19</text>
<text x="0" y="0" transform="matrix(1,0,0,1.18,688.43,245.80)" font-size="6.2" fill="#e8e8e8" text-anchor="middle" >20</text>
<text x="0" y="0" transform="matrix(1,0,0,1.18,707.90,245.80)" font-size="6.2" fill="#e8e8e8" text-anchor="middle" >21</text>
<text x="0" y="0" transform="matrix(1,0,0,1.18,727.37,245.80)" font-size="6.2" fill="#e8e8e8" text-anchor="middle" >22</text>
<text x="0" y="0" transform="matrix(1,0,0,1.18,746.83,245.80)" font-size="6.2" fill="#e8e8e8" text-anchor="middle" >23</text>
<text x="0" y="0" transform="matrix(1,0,0,1.18,766.30,245.80)" font-size="6.2" fill="#e8e8e8" text-anchor="middle" >24</text>
<text x="0" y="0" transform="matrix(1,0,0,1.18,785.77,245.80)" font-size="6.2" fill="#e8e8e8" text-anchor="middle" >25</text>
<text x="0" y="0" transform="matrix(1,0,0,1.18,805.23,245.80)" font-size="6.2" fill="#e8e8e8" text-anchor="middle" >26</text>
<text x="0" y="0" transform="matrix(1,0,0,1.18,824.70,245.80)" font-size="6.2" fill="#e8e8e8" text-anchor="middle" >27</text>
<text x="0" y="0" transform="matrix(1,0,0,1.18,844.17,245.80)" font-size="6.2" fill="#e8e8e8" text-anchor="middle" >28</text>
<text x="0" y="0" transform="matrix(1,0,0,1.18,863.63,245.80)" font-size="6.2" fill="#e8e8e8" text-anchor="middle" >29</text>
<text x="0" y="0" transform="matrix(1,0,0,1.18,883.10,245.80)" font-size="6.2" fill="#e8e8e8" text-anchor="middle" >30</text>
<text x="0" y="0" transform="matrix(1,0,0,1.18,591.20,257.20)" font-size="5.6" fill="#e8e8e8" text-anchor="middle" >ms</text>
<text x="0.00" y="0.00" font-size="5.6" fill="#e8e8e8" text-anchor="middle" transform="translate(265.8,145.5) rotate(-90) scale(1,1.18)">% of frames</text>
<text x="0" y="0" transform="matrix(1,0,0,1.18,614.50,39.50)" font-size="5.6" fill="#ffffff" text-anchor="middle" >Distribution Of GPU &amp; CPU Frametime</text>
<text x="0" y="0" transform="matrix(1,0,0,1.18,614.50,46.10)" font-size="5.6" fill="#ffffff" text-anchor="middle" >Il-2 - VIVE Pro 2 - NVIDIA GeForce RTX 3080 Ti (522.25) - AMD Ryzen 7 5800X3D 8-Core Processor</text>
<line x1="461.72" y1="55.00" x2="461.72" y2="236.40" stroke="#d000d0" stroke-width="0.8" stroke-dasharray="1.6 0.5"/>
<line x1="623.95" y1="55.00" x2="623.95" y2="236.40" stroke="#d000d0" stroke-width="0.8" stroke-dasharray="1.6 0.5"/>
<line x1="786.17" y1="55.00" x2="786.17" y2="236.40" stroke="#d000d0" stroke-width="0.8" stroke-dasharray="1.6 0.5"/>
<line x1="503.90" y1="55.00" x2="503.90" y2="236.40" stroke="#7c7c7c" stroke-width="0.6" />
<text x="0.00" y="0.00" font-size="6.6" fill="#f0b0a8" text-anchor="end" textLength="48.7" lengthAdjust="spacingAndGlyphs" transform="translate(500.50,55.8) rotate(-90)">CPU %99 - 10.5 ms</text>
<line x1="542.83" y1="55.00" x2="542.83" y2="236.40" stroke="#7c7c7c" stroke-width="0.6" />
<text x="0.00" y="0.00" font-size="6.6" fill="#f0b0a8" text-anchor="end" textLength="49.4" lengthAdjust="spacingAndGlyphs" transform="translate(539.43,56.8) rotate(-90)">GPU %50 - 12.5 ms</text>
<line x1="620.70" y1="55.00" x2="620.70" y2="236.40" stroke="#7c7c7c" stroke-width="0.6" />
<text x="0.00" y="0.00" font-size="6.6" fill="#f0b0a8" text-anchor="end" textLength="50.4" lengthAdjust="spacingAndGlyphs" transform="translate(617.30,56.3) rotate(-90)">GPU %99 - 16.5 ms</text>
<line x1="686.89" y1="55.00" x2="686.89" y2="236.40" stroke="#7c7c7c" stroke-width="0.6" />
<text x="0.00" y="0.00" font-size="6.6" fill="#f0b0a8" text-anchor="end" textLength="54.6" lengthAdjust="spacingAndGlyphs" transform="translate(683.49,57.4) rotate(-90)">CPU %99.9 - 19.9 ms</text>
<line x1="716.09" y1="55.00" x2="716.09" y2="236.40" stroke="#7c7c7c" stroke-width="0.6" />
<text x="0.00" y="0.00" font-size="6.6" fill="#f0b0a8" text-anchor="end" textLength="54.6" lengthAdjust="spacingAndGlyphs" transform="translate(712.69,56.3) rotate(-90)">GPU %99.9 - 21.4 ms</text>
<path d="M299.50,236.40 L301.06,236.40 C301.34,234.75 302.58,215.92 303.00,215.80 C303.42,215.68 305.60,233.29 306.31,234.86 C307.03,236.40 311.38,235.25 311.96,235.37 C312.53,235.49 311.96,236.32 313.52,236.40 L388.79,236.40 C389.83,236.28 389.52,235.49 389.83,234.86 C390.13,234.22 392.07,228.97 392.55,228.42 C393.03,227.87 395.40,228.69 395.86,228.01 C396.32,227.33 397.92,220.48 398.29,219.92 C398.67,219.36 399.89,221.34 400.53,220.95 C401.18,220.56 405.42,215.10 406.37,215.03 C407.32,214.95 411.72,219.80 412.41,220.02 C413.09,220.25 414.58,218.00 414.94,217.86 C415.30,217.72 416.37,217.95 416.88,218.22 C417.40,218.49 420.85,221.07 421.36,221.21 C421.88,221.34 423.04,220.68 423.31,219.92 C423.57,219.16 424.45,212.87 424.67,211.68 C424.89,210.49 425.77,205.81 426.03,204.99 C426.30,204.16 427.67,201.67 427.98,201.38 C428.29,201.09 429.55,202.82 429.93,201.38 C430.30,199.94 432.18,185.74 432.65,183.36 C433.12,180.97 435.21,172.75 435.77,171.51 C436.33,170.27 439.05,168.89 439.66,167.91 C440.27,166.92 442.91,160.92 443.36,159.15 C443.81,157.38 444.99,147.12 445.31,145.76 C445.62,144.40 446.91,142.16 447.25,142.16 C447.59,142.16 449.11,143.62 449.59,145.76 C450.07,147.90 452.52,165.72 453.29,168.94 C454.05,172.15 458.46,183.38 459.13,185.93 C459.80,188.48 461.27,198.81 461.66,200.87 C462.05,202.93 463.56,210.07 463.99,211.68 C464.43,213.29 466.56,219.67 467.11,220.95 C467.65,222.23 470.07,226.78 470.81,227.65 C471.54,228.51 475.32,231.27 476.26,231.77 C477.19,232.26 481.43,233.58 482.49,233.83 C483.55,234.07 488.64,234.98 489.49,234.86 C490.35,234.73 492.48,232.77 493.19,232.28 C493.91,231.79 497.62,229.09 498.45,228.68 C499.27,228.26 502.76,227.50 503.51,227.13 C504.26,226.76 507.17,224.37 507.79,224.04 C508.42,223.71 510.72,223.46 511.30,223.01 C511.87,222.56 514.51,219.03 515.00,218.38 C515.48,217.72 516.93,215.39 517.33,214.77 C517.74,214.15 519.12,213.82 520.06,210.65 C520.99,207.48 528.03,179.40 529.01,175.12 C529.99,170.83 531.81,159.89 532.32,157.09 C532.84,154.29 534.84,142.20 535.44,140.09 C536.03,137.99 539.03,130.91 539.72,130.83 C540.40,130.74 543.44,137.54 544.00,139.06 C544.56,140.59 546.13,147.00 546.73,149.88 C547.32,152.76 550.85,172.73 551.40,175.12 C551.94,177.50 553.06,179.38 553.54,179.75 C554.02,180.12 556.92,180.12 557.43,179.75 C557.95,179.38 559.33,178.29 559.96,175.12 C560.60,171.94 564.57,145.33 565.41,140.09 C566.26,134.86 569.78,113.58 570.48,109.71 C571.18,105.84 573.44,91.60 574.17,91.69 C574.91,91.77 578.91,106.87 579.63,110.74 C580.34,114.61 582.46,135.36 583.13,140.09 C583.80,144.83 587.39,166.50 588.00,169.97 C588.60,173.43 590.24,181.17 590.72,183.36 C591.20,185.54 593.44,195.41 594.03,197.26 C594.62,199.11 597.65,205.46 598.12,206.53 C598.59,207.60 599.33,209.66 599.87,210.65 C600.42,211.64 604.12,217.90 604.93,218.89 C605.74,219.88 609.20,222.39 609.99,223.01 C610.79,223.63 614.07,226.16 614.86,226.62 C615.65,227.07 619.11,228.30 619.92,228.68 C620.73,229.05 624.19,230.96 624.98,231.25 C625.78,231.54 628.63,232.03 629.85,232.28 C631.06,232.53 638.56,234.09 640.17,234.34 C641.77,234.59 646.01,235.25 649.90,235.37 C653.79,235.49 670.15,235.72 688.83,235.78 C707.52,235.84 867.93,236.04 883.50,236.09 C883.50,236.14 883.50,236.38 883.50,236.40 Z" fill="#0000ff" stroke="#0000ff" stroke-width="0.4"/>
<path d="M299.50,236.40 C299.65,236.01 299.89,235.91 300.47,233.83 C301.06,231.74 302.37,222.11 303.39,222.50 C304.42,222.88 304.16,234.31 307.29,236.40 L324.22,236.40 C325.70,234.42 325.27,228.98 325.70,223.22 C326.13,217.45 326.67,206.12 327.10,197.98 C327.54,189.85 328.11,175.60 328.60,168.99 C329.10,162.37 330.03,153.90 330.39,153.90 C330.75,153.90 330.62,162.37 331.00,168.99 C331.37,175.60 332.51,192.28 332.89,197.98 C333.26,203.68 333.27,204.56 333.49,206.99 C333.71,209.43 334.02,212.77 334.35,214.20 C334.67,215.64 335.27,216.57 335.65,216.57 C336.03,216.57 336.53,215.64 336.88,214.20 C337.23,212.77 337.75,209.43 337.99,206.99 C338.22,204.56 338.22,203.15 338.43,197.98 C338.65,192.81 339.11,179.29 339.41,172.54 C339.70,165.79 340.03,159.07 340.38,152.97 C340.73,146.87 341.10,137.65 341.74,131.86 C342.39,126.06 343.79,119.13 344.66,114.34 C345.54,109.56 346.71,99.93 347.58,99.93 C348.46,99.93 349.83,109.25 350.50,114.34 C351.17,119.44 351.33,128.97 352.06,133.92 C352.79,138.86 354.73,143.83 355.37,147.31 C356.01,150.78 356.08,153.30 356.34,157.09 C356.61,160.88 356.57,168.83 357.12,172.54 C357.68,176.25 359.40,178.41 360.04,181.81 C360.68,185.21 360.98,192.26 361.40,195.20 C361.83,198.14 362.48,199.60 362.88,201.38 C363.29,203.16 363.61,205.50 364.09,207.05 C364.57,208.59 365.36,210.70 366.08,211.68 C366.79,212.66 368.10,214.28 368.88,213.59 C369.66,212.89 370.71,208.88 371.29,207.05 C371.88,205.21 372.30,203.16 372.79,201.38 C373.29,199.60 373.93,198.91 374.58,195.20 C375.24,191.49 376.55,182.22 377.17,176.66 C377.79,171.10 378.15,162.06 378.73,158.12 C379.31,154.18 380.36,152.02 381.07,150.40 C381.77,148.77 382.53,147.61 383.40,147.31 C384.28,147.00 386.09,148.41 386.91,148.34 C387.72,148.26 388.27,148.03 388.85,146.79 C389.44,145.55 390.24,140.71 390.80,140.09 C391.35,139.48 391.67,142.59 392.55,142.67 C393.43,142.75 395.76,140.69 396.64,140.61 C397.51,140.53 397.81,142.77 398.39,142.16 C398.97,141.54 399.66,137.34 400.53,136.49 C401.41,135.64 403.35,135.72 404.23,136.49 C405.11,137.26 405.41,141.49 406.37,141.64 C407.34,141.79 409.75,138.14 410.65,137.52 C411.56,136.90 411.82,136.90 412.41,137.52 C412.99,138.14 413.73,140.56 414.55,141.64 C415.37,142.72 416.78,143.11 417.86,144.73 C418.94,146.35 420.82,151.06 421.75,152.46 C422.69,153.85 423.44,152.92 424.09,154.00 C424.73,155.08 425.16,158.20 426.03,159.67 C426.91,161.13 428.79,162.47 429.93,163.79 C431.07,165.10 432.75,166.80 433.63,168.42 C434.50,170.04 435.21,172.82 435.77,174.60 C436.32,176.38 436.59,178.87 437.32,180.26 C438.05,181.66 439.58,182.40 440.63,183.87 C441.68,185.34 443.31,188.43 444.33,190.05 C445.35,191.67 446.66,193.99 447.45,194.69 C448.24,195.38 448.42,193.22 449.59,194.69 C450.76,196.15 453.89,202.62 455.23,204.47 C456.58,206.32 457.08,205.42 458.54,207.05 C460.00,208.67 462.81,213.04 464.97,215.28 C467.13,217.53 470.79,220.51 472.95,221.98 C475.11,223.45 477.62,224.14 479.37,225.07 C481.12,226.00 482.55,227.31 484.63,228.16 C486.70,229.01 490.33,230.04 493.19,230.74 C496.05,231.43 499.68,232.25 503.71,232.80 C507.73,233.34 515.65,233.99 520.06,234.34 C524.47,234.69 525.30,234.90 533.10,235.11 C540.90,235.33 548.67,235.61 572.03,235.78 C595.39,235.95 642.11,236.15 688.83,236.25 C735.55,236.34 854.30,236.38 883.50,236.40" fill="none" stroke="#12a6a6" stroke-width="1.1" stroke-linejoin="round"/>
<line x1="299.50" y1="55.00" x2="299.50" y2="236.40" stroke="#a8a8a8" stroke-width="0.9" />
<line x1="299.50" y1="236.40" x2="883.50" y2="236.40" stroke="#b8b8b8" stroke-width="1.2" />
<rect x="911.20" y="60.90" width="64.80" height="19.50" fill="#ffffff" />
<rect x="916.00" y="64.00" width="11.20" height="4.90" fill="#0000ff" />
<line x1="916.00" y1="73.70" x2="927.20" y2="73.70" stroke="#00ffff" stroke-width="1.0" />
<text x="0" y="0" transform="matrix(1,0,0,1.18,930.00,68.90)" font-size="5.5" fill="#000" text-anchor="start" >GPU frametime</text>
<text x="0" y="0" transform="matrix(1,0,0,1.18,930.00,75.60)" font-size="5.5" fill="#000" text-anchor="start" >CPU frametime</text>
<rect x="943.15" y="221.45" width="50.40" height="11.20" fill="#e1e1e1" stroke="#adadad" stroke-width="0.5" />
<text x="0" y="0" transform="matrix(1,0,0,1.18,968.35,229.00)" font-size="5.5" fill="#000" text-anchor="middle" >Save to .csv</text>
<rect x="943.15" y="236.35" width="50.40" height="10.80" fill="#e1e1e1" stroke="#adadad" stroke-width="0.5" />
<text x="0" y="0" transform="matrix(1,0,0,1.18,968.35,244.00)" font-size="5.5" fill="#000" text-anchor="middle" >Save to .png</text>
<rect x="943.15" y="251.25" width="50.40" height="10.60" fill="#e1e1e1" stroke="#adadad" stroke-width="0.5" />
<text x="0" y="0" transform="matrix(1,0,0,1.18,968.35,258.80)" font-size="5.25" fill="#000" text-anchor="middle" >Copy to Clipboard</text>
<line x1="305.12" y1="298.20" x2="305.12" y2="485.60" stroke="#131313" stroke-width="0.6" />
<line x1="310.74" y1="298.20" x2="310.74" y2="485.60" stroke="#131313" stroke-width="0.6" />
<line x1="316.36" y1="298.20" x2="316.36" y2="485.60" stroke="#131313" stroke-width="0.6" />
<line x1="321.98" y1="298.20" x2="321.98" y2="485.60" stroke="#131313" stroke-width="0.6" />
<line x1="327.61" y1="298.20" x2="327.61" y2="485.60" stroke="#131313" stroke-width="0.6" />
<line x1="333.23" y1="298.20" x2="333.23" y2="485.60" stroke="#131313" stroke-width="0.6" />
<line x1="338.85" y1="298.20" x2="338.85" y2="485.60" stroke="#131313" stroke-width="0.6" />
<line x1="344.47" y1="298.20" x2="344.47" y2="485.60" stroke="#131313" stroke-width="0.6" />
<line x1="350.09" y1="298.20" x2="350.09" y2="485.60" stroke="#131313" stroke-width="0.6" />
<line x1="355.71" y1="298.20" x2="355.71" y2="485.60" stroke="#131313" stroke-width="0.6" />
<line x1="361.33" y1="298.20" x2="361.33" y2="485.60" stroke="#131313" stroke-width="0.6" />
<line x1="366.95" y1="298.20" x2="366.95" y2="485.60" stroke="#131313" stroke-width="0.6" />
<line x1="372.57" y1="298.20" x2="372.57" y2="485.60" stroke="#131313" stroke-width="0.6" />
<line x1="378.19" y1="298.20" x2="378.19" y2="485.60" stroke="#131313" stroke-width="0.6" />
<line x1="383.81" y1="298.20" x2="383.81" y2="485.60" stroke="#131313" stroke-width="0.6" />
<line x1="389.44" y1="298.20" x2="389.44" y2="485.60" stroke="#131313" stroke-width="0.6" />
<line x1="395.06" y1="298.20" x2="395.06" y2="485.60" stroke="#131313" stroke-width="0.6" />
<line x1="400.68" y1="298.20" x2="400.68" y2="485.60" stroke="#131313" stroke-width="0.6" />
<line x1="406.30" y1="298.20" x2="406.30" y2="485.60" stroke="#131313" stroke-width="0.6" />
<line x1="411.92" y1="298.20" x2="411.92" y2="485.60" stroke="#131313" stroke-width="0.6" />
<line x1="417.54" y1="298.20" x2="417.54" y2="485.60" stroke="#131313" stroke-width="0.6" />
<line x1="423.16" y1="298.20" x2="423.16" y2="485.60" stroke="#131313" stroke-width="0.6" />
<line x1="428.78" y1="298.20" x2="428.78" y2="485.60" stroke="#131313" stroke-width="0.6" />
<line x1="434.40" y1="298.20" x2="434.40" y2="485.60" stroke="#131313" stroke-width="0.6" />
<line x1="440.02" y1="298.20" x2="440.02" y2="485.60" stroke="#131313" stroke-width="0.6" />
<line x1="445.65" y1="298.20" x2="445.65" y2="485.60" stroke="#131313" stroke-width="0.6" />
<line x1="451.27" y1="298.20" x2="451.27" y2="485.60" stroke="#131313" stroke-width="0.6" />
<line x1="456.89" y1="298.20" x2="456.89" y2="485.60" stroke="#131313" stroke-width="0.6" />
<line x1="462.51" y1="298.20" x2="462.51" y2="485.60" stroke="#131313" stroke-width="0.6" />
<line x1="468.13" y1="298.20" x2="468.13" y2="485.60" stroke="#131313" stroke-width="0.6" />
<line x1="473.75" y1="298.20" x2="473.75" y2="485.60" stroke="#131313" stroke-width="0.6" />
<line x1="479.37" y1="298.20" x2="479.37" y2="485.60" stroke="#131313" stroke-width="0.6" />
<line x1="484.99" y1="298.20" x2="484.99" y2="485.60" stroke="#131313" stroke-width="0.6" />
<line x1="490.61" y1="298.20" x2="490.61" y2="485.60" stroke="#131313" stroke-width="0.6" />
<line x1="496.24" y1="298.20" x2="496.24" y2="485.60" stroke="#131313" stroke-width="0.6" />
<line x1="501.86" y1="298.20" x2="501.86" y2="485.60" stroke="#131313" stroke-width="0.6" />
<line x1="507.48" y1="298.20" x2="507.48" y2="485.60" stroke="#131313" stroke-width="0.6" />
<line x1="513.10" y1="298.20" x2="513.10" y2="485.60" stroke="#131313" stroke-width="0.6" />
<line x1="518.72" y1="298.20" x2="518.72" y2="485.60" stroke="#131313" stroke-width="0.6" />
<line x1="524.34" y1="298.20" x2="524.34" y2="485.60" stroke="#131313" stroke-width="0.6" />
<line x1="529.96" y1="298.20" x2="529.96" y2="485.60" stroke="#131313" stroke-width="0.6" />
<line x1="535.58" y1="298.20" x2="535.58" y2="485.60" stroke="#131313" stroke-width="0.6" />
<line x1="541.20" y1="298.20" x2="541.20" y2="485.60" stroke="#131313" stroke-width="0.6" />
<line x1="546.82" y1="298.20" x2="546.82" y2="485.60" stroke="#131313" stroke-width="0.6" />
<line x1="552.45" y1="298.20" x2="552.45" y2="485.60" stroke="#131313" stroke-width="0.6" />
<line x1="558.07" y1="298.20" x2="558.07" y2="485.60" stroke="#131313" stroke-width="0.6" />
<line x1="563.69" y1="298.20" x2="563.69" y2="485.60" stroke="#131313" stroke-width="0.6" />
<line x1="569.31" y1="298.20" x2="569.31" y2="485.60" stroke="#131313" stroke-width="0.6" />
<line x1="574.93" y1="298.20" x2="574.93" y2="485.60" stroke="#131313" stroke-width="0.6" />
<line x1="580.55" y1="298.20" x2="580.55" y2="485.60" stroke="#131313" stroke-width="0.6" />
<line x1="586.17" y1="298.20" x2="586.17" y2="485.60" stroke="#131313" stroke-width="0.6" />
<line x1="591.79" y1="298.20" x2="591.79" y2="485.60" stroke="#131313" stroke-width="0.6" />
<line x1="597.41" y1="298.20" x2="597.41" y2="485.60" stroke="#131313" stroke-width="0.6" />
<line x1="603.03" y1="298.20" x2="603.03" y2="485.60" stroke="#131313" stroke-width="0.6" />
<line x1="608.65" y1="298.20" x2="608.65" y2="485.60" stroke="#131313" stroke-width="0.6" />
<line x1="614.28" y1="298.20" x2="614.28" y2="485.60" stroke="#131313" stroke-width="0.6" />
<line x1="619.90" y1="298.20" x2="619.90" y2="485.60" stroke="#131313" stroke-width="0.6" />
<line x1="625.52" y1="298.20" x2="625.52" y2="485.60" stroke="#131313" stroke-width="0.6" />
<line x1="631.14" y1="298.20" x2="631.14" y2="485.60" stroke="#131313" stroke-width="0.6" />
<line x1="636.76" y1="298.20" x2="636.76" y2="485.60" stroke="#131313" stroke-width="0.6" />
<line x1="642.38" y1="298.20" x2="642.38" y2="485.60" stroke="#131313" stroke-width="0.6" />
<line x1="648.00" y1="298.20" x2="648.00" y2="485.60" stroke="#131313" stroke-width="0.6" />
<line x1="653.62" y1="298.20" x2="653.62" y2="485.60" stroke="#131313" stroke-width="0.6" />
<line x1="659.24" y1="298.20" x2="659.24" y2="485.60" stroke="#131313" stroke-width="0.6" />
<line x1="664.87" y1="298.20" x2="664.87" y2="485.60" stroke="#131313" stroke-width="0.6" />
<line x1="670.49" y1="298.20" x2="670.49" y2="485.60" stroke="#131313" stroke-width="0.6" />
<line x1="676.11" y1="298.20" x2="676.11" y2="485.60" stroke="#131313" stroke-width="0.6" />
<line x1="681.73" y1="298.20" x2="681.73" y2="485.60" stroke="#131313" stroke-width="0.6" />
<line x1="687.35" y1="298.20" x2="687.35" y2="485.60" stroke="#131313" stroke-width="0.6" />
<line x1="692.97" y1="298.20" x2="692.97" y2="485.60" stroke="#131313" stroke-width="0.6" />
<line x1="698.59" y1="298.20" x2="698.59" y2="485.60" stroke="#131313" stroke-width="0.6" />
<line x1="704.21" y1="298.20" x2="704.21" y2="485.60" stroke="#131313" stroke-width="0.6" />
<line x1="709.83" y1="298.20" x2="709.83" y2="485.60" stroke="#131313" stroke-width="0.6" />
<line x1="715.45" y1="298.20" x2="715.45" y2="485.60" stroke="#131313" stroke-width="0.6" />
<line x1="721.08" y1="298.20" x2="721.08" y2="485.60" stroke="#131313" stroke-width="0.6" />
<line x1="726.70" y1="298.20" x2="726.70" y2="485.60" stroke="#131313" stroke-width="0.6" />
<line x1="732.32" y1="298.20" x2="732.32" y2="485.60" stroke="#131313" stroke-width="0.6" />
<line x1="737.94" y1="298.20" x2="737.94" y2="485.60" stroke="#131313" stroke-width="0.6" />
<line x1="743.56" y1="298.20" x2="743.56" y2="485.60" stroke="#131313" stroke-width="0.6" />
<line x1="749.18" y1="298.20" x2="749.18" y2="485.60" stroke="#131313" stroke-width="0.6" />
<line x1="754.80" y1="298.20" x2="754.80" y2="485.60" stroke="#131313" stroke-width="0.6" />
<line x1="760.42" y1="298.20" x2="760.42" y2="485.60" stroke="#131313" stroke-width="0.6" />
<line x1="766.04" y1="298.20" x2="766.04" y2="485.60" stroke="#131313" stroke-width="0.6" />
<line x1="771.66" y1="298.20" x2="771.66" y2="485.60" stroke="#131313" stroke-width="0.6" />
<line x1="777.29" y1="298.20" x2="777.29" y2="485.60" stroke="#131313" stroke-width="0.6" />
<line x1="782.91" y1="298.20" x2="782.91" y2="485.60" stroke="#131313" stroke-width="0.6" />
<line x1="788.53" y1="298.20" x2="788.53" y2="485.60" stroke="#131313" stroke-width="0.6" />
<line x1="794.15" y1="298.20" x2="794.15" y2="485.60" stroke="#131313" stroke-width="0.6" />
<line x1="799.77" y1="298.20" x2="799.77" y2="485.60" stroke="#131313" stroke-width="0.6" />
<line x1="805.39" y1="298.20" x2="805.39" y2="485.60" stroke="#131313" stroke-width="0.6" />
<line x1="811.01" y1="298.20" x2="811.01" y2="485.60" stroke="#131313" stroke-width="0.6" />
<line x1="816.63" y1="298.20" x2="816.63" y2="485.60" stroke="#131313" stroke-width="0.6" />
<line x1="822.25" y1="298.20" x2="822.25" y2="485.60" stroke="#131313" stroke-width="0.6" />
<line x1="827.87" y1="298.20" x2="827.87" y2="485.60" stroke="#131313" stroke-width="0.6" />
<line x1="833.50" y1="298.20" x2="833.50" y2="485.60" stroke="#131313" stroke-width="0.6" />
<line x1="839.12" y1="298.20" x2="839.12" y2="485.60" stroke="#131313" stroke-width="0.6" />
<line x1="844.74" y1="298.20" x2="844.74" y2="485.60" stroke="#131313" stroke-width="0.6" />
<line x1="850.36" y1="298.20" x2="850.36" y2="485.60" stroke="#131313" stroke-width="0.6" />
<line x1="855.98" y1="298.20" x2="855.98" y2="485.60" stroke="#131313" stroke-width="0.6" />
<line x1="861.60" y1="298.20" x2="861.60" y2="485.60" stroke="#131313" stroke-width="0.6" />
<line x1="299.50" y1="483.40" x2="299.50" y2="485.60" stroke="#131313" stroke-width="0.6" />
<line x1="291.00" y1="473.00" x2="861.60" y2="473.00" stroke="#131313" stroke-width="0.8" />
<line x1="291.00" y1="462.59" x2="861.60" y2="462.59" stroke="#131313" stroke-width="0.8" />
<line x1="291.00" y1="452.19" x2="861.60" y2="452.19" stroke="#131313" stroke-width="0.8" />
<line x1="291.00" y1="441.78" x2="861.60" y2="441.78" stroke="#131313" stroke-width="0.8" />
<line x1="291.00" y1="431.38" x2="861.60" y2="431.38" stroke="#131313" stroke-width="0.8" />
<line x1="291.00" y1="420.97" x2="861.60" y2="420.97" stroke="#131313" stroke-width="0.8" />
<line x1="291.00" y1="410.56" x2="861.60" y2="410.56" stroke="#131313" stroke-width="0.8" />
<line x1="291.00" y1="400.16" x2="861.60" y2="400.16" stroke="#131313" stroke-width="0.8" />
<line x1="291.00" y1="389.75" x2="861.60" y2="389.75" stroke="#131313" stroke-width="0.8" />
<line x1="291.00" y1="379.35" x2="861.60" y2="379.35" stroke="#131313" stroke-width="0.8" />
<line x1="291.00" y1="368.94" x2="861.60" y2="368.94" stroke="#131313" stroke-width="0.8" />
<line x1="291.00" y1="358.54" x2="861.60" y2="358.54" stroke="#131313" stroke-width="0.8" />
<line x1="291.00" y1="348.13" x2="861.60" y2="348.13" stroke="#131313" stroke-width="0.8" />
<line x1="291.00" y1="337.73" x2="861.60" y2="337.73" stroke="#131313" stroke-width="0.8" />
<line x1="291.00" y1="327.32" x2="861.60" y2="327.32" stroke="#131313" stroke-width="0.8" />
<line x1="291.00" y1="316.92" x2="861.60" y2="316.92" stroke="#131313" stroke-width="0.8" />
<line x1="291.00" y1="306.51" x2="861.60" y2="306.51" stroke="#131313" stroke-width="0.8" />
<line x1="291.00" y1="483.40" x2="299.50" y2="483.40" stroke="#131313" stroke-width="0.8" />
<text x="0" y="0" transform="matrix(1,0,0,1.18,290.20,485.65)" font-size="6.2" fill="#e8e8e8" text-anchor="end" >0</text>
<text x="0" y="0" transform="matrix(1,0,0,1.18,290.20,475.25)" font-size="6.2" fill="#e8e8e8" text-anchor="end" >5</text>
<text x="0" y="0" transform="matrix(1,0,0,1.18,290.20,464.84)" font-size="6.2" fill="#e8e8e8" text-anchor="end" >10</text>
<text x="0" y="0" transform="matrix(1,0,0,1.18,290.20,454.44)" font-size="6.2" fill="#e8e8e8" text-anchor="end" >15</text>
<text x="0" y="0" transform="matrix(1,0,0,1.18,290.20,444.03)" font-size="6.2" fill="#e8e8e8" text-anchor="end" >20</text>
<text x="0" y="0" transform="matrix(1,0,0,1.18,290.20,433.62)" font-size="6.2" fill="#e8e8e8" text-anchor="end" >25</text>
<text x="0" y="0" transform="matrix(1,0,0,1.18,290.20,423.22)" font-size="6.2" fill="#e8e8e8" text-anchor="end" >30</text>
<text x="0" y="0" transform="matrix(1,0,0,1.18,290.20,412.81)" font-size="6.2" fill="#e8e8e8" text-anchor="end" >35</text>
<text x="0" y="0" transform="matrix(1,0,0,1.18,290.20,402.41)" font-size="6.2" fill="#e8e8e8" text-anchor="end" >40</text>
<text x="0" y="0" transform="matrix(1,0,0,1.18,290.20,392.00)" font-size="6.2" fill="#e8e8e8" text-anchor="end" >45</text>
<text x="0" y="0" transform="matrix(1,0,0,1.18,290.20,381.60)" font-size="6.2" fill="#e8e8e8" text-anchor="end" >50</text>
<text x="0" y="0" transform="matrix(1,0,0,1.18,290.20,371.19)" font-size="6.2" fill="#e8e8e8" text-anchor="end" >55</text>
<text x="0" y="0" transform="matrix(1,0,0,1.18,290.20,360.79)" font-size="6.2" fill="#e8e8e8" text-anchor="end" >60</text>
<text x="0" y="0" transform="matrix(1,0,0,1.18,290.20,350.38)" font-size="6.2" fill="#e8e8e8" text-anchor="end" >65</text>
<text x="0" y="0" transform="matrix(1,0,0,1.18,290.20,339.98)" font-size="6.2" fill="#e8e8e8" text-anchor="end" >70</text>
<text x="0" y="0" transform="matrix(1,0,0,1.18,290.20,329.57)" font-size="6.2" fill="#e8e8e8" text-anchor="end" >75</text>
<text x="0" y="0" transform="matrix(1,0,0,1.18,290.20,319.17)" font-size="6.2" fill="#e8e8e8" text-anchor="end" >80</text>
<text x="0" y="0" transform="matrix(1,0,0,1.18,290.20,308.76)" font-size="6.2" fill="#e8e8e8" text-anchor="end" >85</text>
<text x="0" y="0" transform="matrix(1,0,0,1.18,299.00,493.90)" font-size="6.2" fill="#e8e8e8" text-anchor="middle" >0</text>
<text x="0" y="0" transform="matrix(1,0,0,1.18,355.21,493.90)" font-size="6.2" fill="#e8e8e8" text-anchor="middle" >10</text>
<text x="0" y="0" transform="matrix(1,0,0,1.18,411.42,493.90)" font-size="6.2" fill="#e8e8e8" text-anchor="middle" >20</text>
<text x="0" y="0" transform="matrix(1,0,0,1.18,467.63,493.90)" font-size="6.2" fill="#e8e8e8" text-anchor="middle" >30</text>
<text x="0" y="0" transform="matrix(1,0,0,1.18,523.84,493.90)" font-size="6.2" fill="#e8e8e8" text-anchor="middle" >40</text>
<text x="0" y="0" transform="matrix(1,0,0,1.18,580.05,493.90)" font-size="6.2" fill="#e8e8e8" text-anchor="middle" >50</text>
<text x="0" y="0" transform="matrix(1,0,0,1.18,636.26,493.90)" font-size="6.2" fill="#e8e8e8" text-anchor="middle" >60</text>
<text x="0" y="0" transform="matrix(1,0,0,1.18,692.47,493.90)" font-size="6.2" fill="#e8e8e8" text-anchor="middle" >70</text>
<text x="0" y="0" transform="matrix(1,0,0,1.18,748.68,493.90)" font-size="6.2" fill="#e8e8e8" text-anchor="middle" >80</text>
<text x="0" y="0" transform="matrix(1,0,0,1.18,804.89,493.90)" font-size="6.2" fill="#e8e8e8" text-anchor="middle" >90</text>
<text x="0" y="0" transform="matrix(1,0,0,1.18,861.10,493.90)" font-size="6.2" fill="#e8e8e8" text-anchor="middle" >100</text>
<text x="0" y="0" transform="matrix(1,0,0,1.18,580.40,505.80)" font-size="5.6" fill="#e8e8e8" text-anchor="middle" >% Usage</text>
<text x="0.00" y="0.00" font-size="5.6" fill="#e8e8e8" text-anchor="middle" transform="translate(265.8,390) rotate(-90) scale(1,1.18)">% of time</text>
<text x="0" y="0" transform="matrix(1,0,0,1.18,614.50,282.50)" font-size="5.6" fill="#ffffff" text-anchor="middle" >Distribution Of GPU &amp; CPU Usage</text>
<text x="0" y="0" transform="matrix(1,0,0,1.18,614.50,289.00)" font-size="5.6" fill="#ffffff" text-anchor="middle" >Il-2 - VIVE Pro 2 - NVIDIA GeForce RTX 3080 Ti (522.25) - AMD Ryzen 7 5800X3D 8-Core Processor</text>
<path d="M299.50,483.40 L726.70,483.40 L732.32,483.19 L743.56,481.01 L749.18,479.86 L754.24,475.08 L759.86,474.04 L765.48,476.12 L772.23,480.59 L777.85,482.78 L782.91,483.09 L816.63,483.09 L824.50,482.78 L829.56,481.11 L839.12,477.37 L844.74,334.61 L850.92,483.40 L861.60,483.40 Z" fill="#0000ff" stroke="#0000ff" stroke-width="0.4"/>
<line x1="411.92" y1="483.20" x2="726.70" y2="483.20" stroke="#3050ff" stroke-width="0.7" />
<path d="M299.50,483.40 L310.74,483.40 C311.75,483.38 315.72,483.16 316.36,483.09 C317.00,483.01 320.75,482.49 321.42,482.15 C322.10,481.81 326.93,477.88 327.61,477.37 C328.28,476.85 332.02,474.12 332.66,473.62 C333.30,473.12 337.61,469.12 338.28,469.04 C338.96,468.97 343.20,472.17 343.91,472.37 C344.61,472.57 349.38,472.66 350.09,472.37 C350.80,472.08 355.04,468.38 355.71,467.58 C356.38,466.79 360.66,459.73 361.33,459.05 C362.01,458.38 366.31,456.35 366.95,456.35 C367.59,456.35 371.34,458.53 372.01,459.05 C372.69,459.58 377.49,464.25 378.19,465.09 C378.90,465.92 383.14,472.37 383.81,473.00 C384.49,473.62 388.76,475.23 389.44,475.49 C390.11,475.75 394.38,477.18 395.06,477.37 C395.73,477.55 400.07,478.46 400.68,478.51 C401.29,478.56 404.67,478.17 405.17,478.20 C405.68,478.23 408.47,478.87 409.11,479.03 C409.75,479.19 415.01,480.72 415.85,480.90 C416.70,481.09 422.39,482.05 423.16,482.15 C423.94,482.25 427.77,482.51 428.78,482.57 C429.79,482.63 438.34,483.14 440.02,483.19 C441.71,483.24 440.02,483.39 456.89,483.40 L861.60,483.40" fill="none" stroke="#0e9c9c" stroke-width="0.95" stroke-linejoin="round"/>
<path d="M299.50,483.40 L378.19,483.40 L389.44,483.19 L400.12,482.98 L404.61,481.32 L411.36,483.40 L419.23,481.32 L428.78,483.40 L440.02,480.28 L445.65,482.15 L451.27,479.45 L456.89,481.32 L466.44,480.07 L473.75,482.46 L481.62,479.24 L490.61,481.32 L497.36,479.24 L507.48,480.69 L513.10,475.91 L523.22,480.07 L529.96,475.28 L535.58,478.41 L541.20,477.78 L546.82,474.24 L552.45,478.61 L558.07,474.24 L563.12,473.41 L569.31,479.24 L574.93,473.41 L586.17,478.61 L591.79,473.41 L597.98,479.24 L603.03,478.61 L608.65,475.08 L614.28,479.45 L620.46,477.99 L625.52,477.37 L631.14,482.15 L636.76,480.28 L646.32,482.57 L653.62,481.11 L662.05,482.98 L670.49,482.15 L677.79,483.30 L687.35,482.57 L690.72,483.40 L861.60,483.40" fill="none" stroke="#d8703f" stroke-width="0.8" stroke-linejoin="round"/>
<line x1="299.50" y1="298.20" x2="299.50" y2="483.40" stroke="#a8a8a8" stroke-width="0.9" />
<line x1="299.50" y1="483.40" x2="861.60" y2="483.40" stroke="#a8a8a8" stroke-width="0.9" />
<rect x="889.00" y="304.00" width="87.00" height="26.60" fill="#ffffff" />
<rect x="893.80" y="307.20" width="11.00" height="4.60" fill="#0000ff" />
<line x1="893.80" y1="316.60" x2="904.80" y2="316.60" stroke="#00ffff" stroke-width="1.0" />
<line x1="893.80" y1="323.60" x2="904.80" y2="323.60" stroke="#ff7f50" stroke-width="1.0" />
<text x="0" y="0" transform="matrix(1,0,0,1.18,907.80,311.70)" font-size="5.4" fill="#000" text-anchor="start" >GPU Usage</text>
<text x="0" y="0" transform="matrix(1,0,0,1.18,907.80,318.50)" font-size="5.4" fill="#000" text-anchor="start" >CPU Usage</text>
<text x="0" y="0" transform="matrix(1,0,0,1.18,907.80,325.70)" font-size="5.4" fill="#000" text-anchor="start" >Max. CPU/Thread Usage</text>
<rect x="943.25" y="469.65" width="50.20" height="10.80" fill="#e1e1e1" stroke="#adadad" stroke-width="0.5" />
<text x="0" y="0" transform="matrix(1,0,0,1.18,968.35,477.20)" font-size="5.5" fill="#000" text-anchor="middle" >Save to .csv</text>
<rect x="943.25" y="484.55" width="50.20" height="11.00" fill="#e1e1e1" stroke="#adadad" stroke-width="0.5" />
<text x="0" y="0" transform="matrix(1,0,0,1.18,968.35,492.20)" font-size="5.5" fill="#000" text-anchor="middle" >Save to .png</text>
<rect x="943.25" y="499.35" width="50.20" height="10.90" fill="#e1e1e1" stroke="#adadad" stroke-width="0.5" />
<text x="0" y="0" transform="matrix(1,0,0,1.18,968.35,506.90)" font-size="5.25" fill="#000" text-anchor="middle" >Copy to Clipboard</text>
</svg>
</body></html>
